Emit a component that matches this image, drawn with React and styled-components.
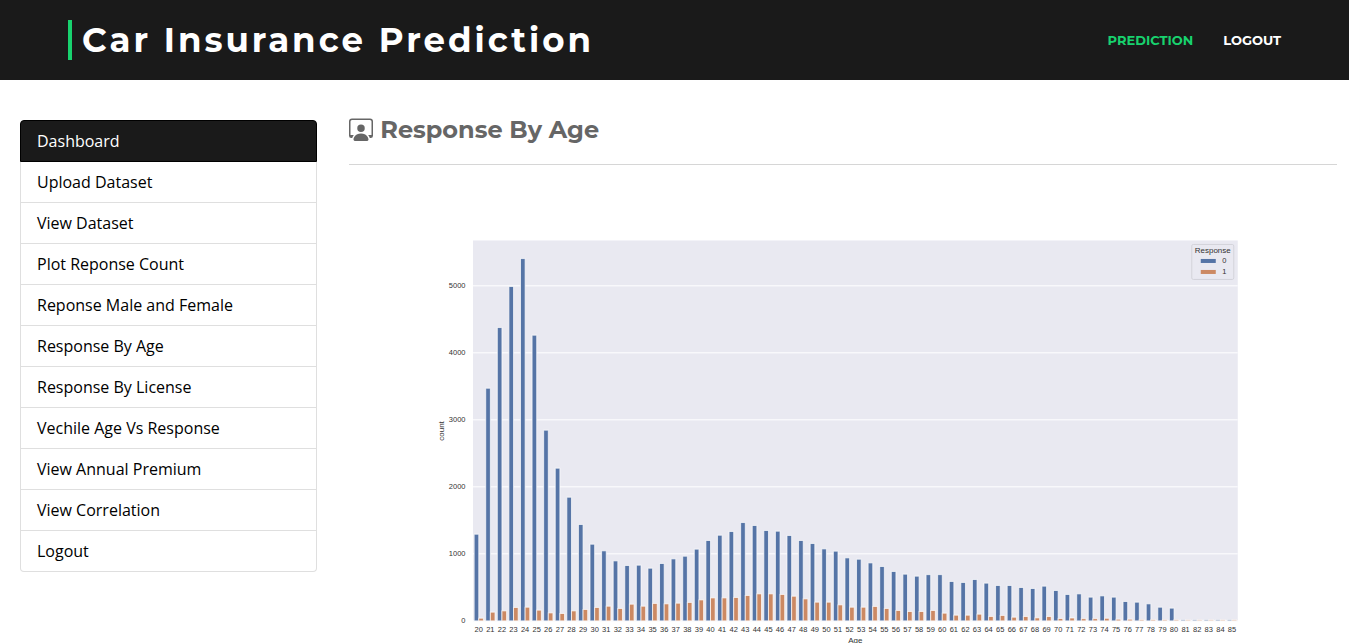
import React from "react";
import styled, { createGlobalStyle } from "styled-components";
import { BsPersonWorkspace } from "react-icons/bs";

const menu = [
  "Dashboard",
  "Upload Dataset",
  "View Dataset",
  "Plot Reponse Count",
  "Reponse Male and Female",
  "Response By Age",
  "Response By License",
  "Vechile Age Vs Response",
  "View Annual Premium",
  "View Correlation",
  "Logout"
];

// count of customers per age, starting at 20
const FIRST_AGE = 20;
const noResponse = [
  1278, 3456, 4361, 4973, 5390, 4247, 2830, 2263, 1830, 1423, 1129, 1030, 880,
  811, 816, 771, 841, 910, 950, 1055, 1184, 1263, 1318, 1452, 1408, 1333, 1323,
  1259, 1184, 1139, 1059, 1025, 925, 905, 850, 796, 722, 682, 652, 675, 675,
  573, 558, 602, 548, 513, 513, 483, 468, 503, 438, 379, 388, 339, 358, 339,
  274, 264, 239, 189, 175, 2, 2, 2, 2, 2
];
const yesResponse = [
  25, 115, 134, 185, 189, 145, 104, 95, 134, 155, 185, 204, 170, 234, 204, 245,
  239, 249, 260, 298, 328, 328, 334, 364, 388, 388, 379, 353, 313, 264, 264,
  224, 189, 189, 200, 170, 140, 125, 125, 140, 100, 70, 70, 85, 51, 66, 40, 50,
  30, 50, 20, 28, 18, 18, 24, 10, 10, 3, 3, 2, 2, 0, 0, 0, 0, 0
];

// plot area inside the 1976 x 1000 drawing
const PLOT = { left: 248, top: 151, width: 1530, bottom: 912 };
const STEP = PLOT.width / noResponse.length;
const BAR = STEP * 0.4;
const toY = (count) => PLOT.bottom - count * 0.1341;

const AgeChart = () => {
  const renderBars = (counts, offset, color) => {
    return counts.map((count, index) => (
      <Bar
        key={index}
        x={PLOT.left + STEP * (index + 0.5) + offset}
        y={toY(count) - 2}
        width={BAR}
        height={PLOT.bottom - toY(count) + 2}
        fill={color}
      />
    ));
  };

  return (
    <Chart viewBox="0 0 1976 1000" role="img" aria-label="Response By Age">
      <rect
        x={PLOT.left}
        y={PLOT.top}
        width={PLOT.width}
        height={PLOT.bottom - PLOT.top}
        fill="#e9e9f1"
      />
      {[0, 1000, 2000, 3000, 4000, 5000].map((tick) => (
        <g key={tick}>
          <GridLine
            x1={PLOT.left}
            x2={PLOT.left + PLOT.width}
            y1={toY(tick)}
            y2={toY(tick)}
          />
          <Tick x={PLOT.left - 15} y={toY(tick) + 5} textAnchor="end">
            {tick}
          </Tick>
        </g>
      ))}
      {renderBars(noResponse, -BAR, "#5574a6")}
      {renderBars(yesResponse, 0, "#cc8963")}
      {noResponse.map((_, index) => (
        <Tick
          key={index}
          x={PLOT.left + STEP * (index + 0.5)}
          y="935"
          textAnchor="middle"
        >
          {FIRST_AGE + index}
        </Tick>
      ))}
      <AxisLabel x="1013" y="956" textAnchor="middle">
        Age
      </AxisLabel>
      <AxisLabel transform="translate(191 532) rotate(-90)" textAnchor="middle">
        count
      </AxisLabel>
      <LegendBox x="1686" y="159" width="84" height="70" rx="3" />
      <AxisLabel x="1728" y="177" textAnchor="middle">
        Response
      </AxisLabel>
      <rect x="1704" y="188" width="30" height="8" fill="#5574a6" />
      <rect x="1704" y="210" width="30" height="8" fill="#cc8963" />
      <Tick x="1747" y="197">
        0
      </Tick>
      <Tick x="1747" y="219">
        1
      </Tick>
    </Chart>
  );
};

const App = () => {
  return (
    <>
      <GlobalStyle />
      <Header>
        <Brand>Car Insurance Prediction</Brand>
        <Nav>
          <NavLink href="#prediction" $active>
            Prediction
          </NavLink>
          <NavLink href="#logout">Logout</NavLink>
        </Nav>
      </Header>
      <Main>
        <Sidebar>
          {menu.map((item, index) => (
            <MenuLink href="#" key={item} $active={index === 0}>
              {item}
            </MenuLink>
          ))}
        </Sidebar>
        <Content>
          <Title>
            <TitleIcon />
            Response By Age
          </Title>
          <AgeChart />
        </Content>
      </Main>
    </>
  );
};

const GlobalStyle = createGlobalStyle`
  * {
    box-sizing: border-box;
  }

  body {
    margin: 0;
    background: #ffffff;
    font-family: "Open Sans", sans-serif;
    font-size: 16px;
    line-height: 24px;
  }
`;

const Header = styled.header`
  display: flex;
  align-items: center;
  justify-content: space-between;
  padding: 20px 68px;
  background: #1a1a1a;
`;

const Brand = styled.h1`
  margin: 0;
  padding-left: 10px;
  border-left: 4px solid #18d26e;
  color: #ffffff;
  font-family: Montserrat, Inter, sans-serif;
  font-size: 34px;
  font-weight: 700;
  line-height: 40px;
  letter-spacing: 3px;
`;

const Nav = styled.nav`
  display: flex;
  gap: 30px;
`;

const NavLink = styled.a`
  color: ${(props) => (props.$active ? "#18d26e" : "#ffffff")};
  font-family: Montserrat, Inter, sans-serif;
  font-size: 13px;
  font-weight: 700;
  text-decoration: none;
  text-transform: uppercase;
`;

const Main = styled.main`
  display: grid;
  grid-template-columns: minmax(0, 1fr) minmax(0, 3fr);
`;

const Sidebar = styled.nav`
  display: flex;
  flex-direction: column;
  align-self: start;
  margin: 40px 20px 0;
`;

const MenuLink = styled.a`
  padding: 8px 16px;
  border: 1px solid ${(props) => (props.$active ? "#000000" : "#dfdfdf")};
  background: ${(props) => (props.$active ? "#1a1a1a" : "#ffffff")};
  color: ${(props) => (props.$active ? "#ffffff" : "#000000")};
  text-decoration: none;

  & + & {
    border-top: 0;
  }

  &:first-child {
    border-radius: 4px 4px 0 0;
  }

  &:last-child {
    border-radius: 0 0 4px 4px;
  }
`;

const Content = styled.section`
  padding: 34px 12px 0;
`;

const Title = styled.h2`
  margin: 0;
  padding-bottom: 18px;
  border-bottom: 1px solid #d6d6d6;
  color: #666666;
  font-family: Montserrat, Inter, sans-serif;
  font-size: 24px;
  font-weight: 700;
  line-height: 32px;
`;

const TitleIcon = styled(BsPersonWorkspace)`
  margin-right: 7px;
  vertical-align: -3px;
`;

const Chart = styled.svg`
  display: block;
  width: 100%;
  font-family: "Liberation Sans", Arial, sans-serif;
`;

const Bar = styled.rect`
  stroke: #ffffff;
  stroke-opacity: 0.7;
  stroke-width: 2px;
`;

const GridLine = styled.line`
  stroke: #f8f8fb;
  stroke-width: 3px;
`;

const Tick = styled.text`
  fill: #333333;
  font-size: 15px;
`;

const AxisLabel = styled.text`
  fill: #333333;
  font-size: 16px;
`;

const LegendBox = styled.rect`
  fill: #e9e9f1;
  stroke: #d3d3da;
  stroke-width: 2px;
`;

export default App;
